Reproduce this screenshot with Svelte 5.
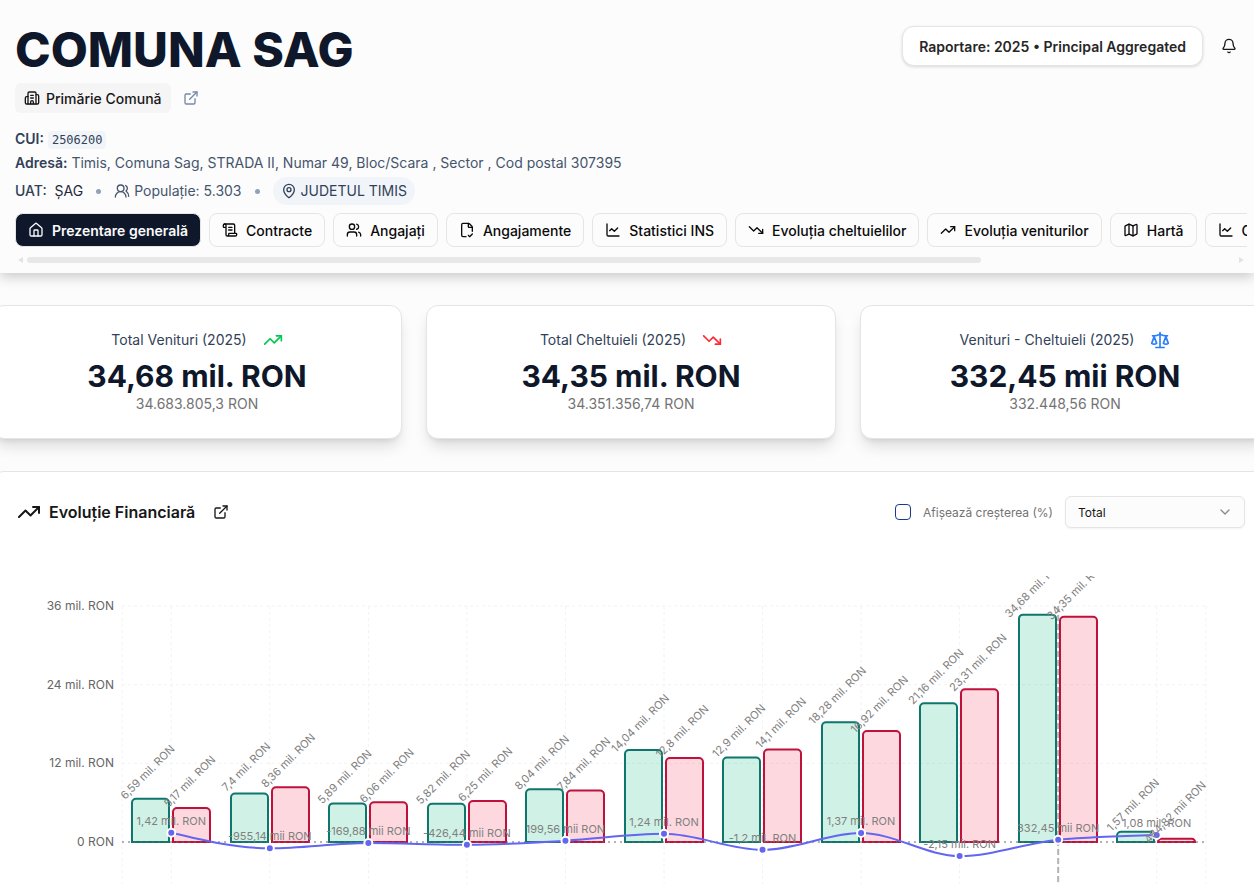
<script>
    const icons = {
        building: [
            "M10 12h4",
            "M10 8h4",
            "M14 21v-3a2 2 0 0 0-4 0v3",
            "M6 10H4a2 2 0 0 0-2 2v7a2 2 0 0 0 2 2h16a2 2 0 0 0 2-2V9a2 2 0 0 0-2-2h-2",
            "M6 21V5a2 2 0 0 1 2-2h8a2 2 0 0 1 2 2v16",
        ],
        external: ["M15 3h6v6", "M10 14 21 3", "M18 13v6a2 2 0 0 1-2 2H5a2 2 0 0 1-2-2V8a2 2 0 0 1 2-2h6"],
        people: ["M18 21a8 8 0 0 0-16 0", "M5 8a5 5 0 1 0 10 0a5 5 0 1 0-10 0", "M22 20c0-3.37-2-6.5-4-8a5 5 0 0 0-.45-8.3"],
        pin: [
            "M20 10c0 4.993-5.539 10.193-7.399 11.799a1 1 0 0 1-1.202 0C9.539 20.193 4 14.993 4 10a8 8 0 0 1 16 0",
            "M9 10a3 3 0 1 0 6 0a3 3 0 1 0-6 0",
        ],
        home: [
            "M15 21v-8a1 1 0 0 0-1-1h-4a1 1 0 0 0-1 1v8",
            "M3 10a2 2 0 0 1 .709-1.528l7-6a2 2 0 0 1 2.582 0l7 6A2 2 0 0 1 21 10v9a2 2 0 0 1-2 2H5a2 2 0 0 1-2-2z",
        ],
        scroll: [
            "M15 12h-5",
            "M15 8h-5",
            "M19 17V5a2 2 0 0 0-2-2H4",
            "M8 21h12a2 2 0 0 0 2-2v-1a1 1 0 0 0-1-1H11a1 1 0 0 0-1 1v1a2 2 0 1 1-4 0V5a2 2 0 1 0-4 0v2a1 1 0 0 0 1 1h3",
        ],
        users: [
            "M16 21v-2a4 4 0 0 0-4-4H6a4 4 0 0 0-4 4v2",
            "M16 3.128a4 4 0 0 1 0 7.744",
            "M22 21v-2a4 4 0 0 0-3-3.87",
            "M5 7a4 4 0 1 0 8 0a4 4 0 1 0-8 0",
        ],
        fileCheck: [
            "M10.5 22H6a2 2 0 0 1-2-2V4a2 2 0 0 1 2-2h8a2.4 2.4 0 0 1 1.706.706l3.588 3.588A2.4 2.4 0 0 1 20 8v6",
            "M14 2v5a1 1 0 0 0 1 1h5",
            "m14 20 2 2 4-4",
        ],
        chart: ["M3 3v16a2 2 0 0 0 2 2h16", "m19 9-5 5-4-4-3 3"],
        down: ["M16 17h6v-6", "m22 17-8.5-8.5-5 5L2 7"],
        up: ["M16 7h6v6", "m22 7-8.5 8.5-5-5L2 17"],
        map: [
            "M14.106 5.553a2 2 0 0 0 1.788 0l3.659-1.83A1 1 0 0 1 21 4.619v12.764a1 1 0 0 1-.553.894l-4.553 2.277a2 2 0 0 1-1.788 0l-4.212-2.106a2 2 0 0 0-1.788 0l-3.659 1.83A1 1 0 0 1 3 19.381V6.618a1 1 0 0 1 .553-.894l4.553-2.277a2 2 0 0 1 1.788 0z",
            "M15 5.764v15",
            "M9 3.236v15",
        ],
        bell: [
            "M10.268 21a2 2 0 0 0 3.464 0",
            "M3.262 15.326A1 1 0 0 0 4 17h16a1 1 0 0 0 .74-1.673C19.41 13.956 18 12.499 18 8A6 6 0 0 0 6 8c0 4.499-1.411 5.956-2.738 7.326",
        ],
        scale: [
            "m16 16 3-8 3 8c-.87.65-1.92 1-3 1s-2.13-.35-3-1Z",
            "m2 16 3-8 3 8c-.87.65-1.92 1-3 1s-2.13-.35-3-1Z",
            "M7 21h10",
            "M12 3v18",
            "M3 7h2c2 0 5-1 7-2 2 1 5 2 7 2h2",
        ],
    };

    const tabs = [
        { label: "Prezentare generală", icon: "home" },
        { label: "Contracte", icon: "scroll" },
        { label: "Angajați", icon: "users" },
        { label: "Angajamente", icon: "fileCheck" },
        { label: "Statistici INS", icon: "chart" },
        { label: "Evoluția cheltuielilor", icon: "down" },
        { label: "Evoluția veniturilor", icon: "up" },
        { label: "Hartă", icon: "map" },
        { label: "Clasament", icon: "chart" },
    ];
    let activeTab = $state("Prezentare generală");

    const cards = [
        { title: "Total Venituri (2025)", value: "34,68 mil. RON", exact: "34.683.805,3 RON", icon: "up", tone: "green" },
        { title: "Total Cheltuieli (2025)", value: "34,35 mil. RON", exact: "34.351.356,74 RON", icon: "down", tone: "red" },
        { title: "Venituri - Cheltuieli (2025)", value: "332,45 mii RON", exact: "332.448,56 RON", icon: "scale", tone: "blue" },
    ];

    // amounts in millions of RON
    const years = [
        { income: 6.59, expense: 5.17, balance: 1.42 },
        { income: 7.4, expense: 8.36, balance: -0.95514 },
        { income: 5.89, expense: 6.06, balance: -0.16988 },
        { income: 5.82, expense: 6.25, balance: -0.42644 },
        { income: 8.04, expense: 7.84, balance: 0.19956 },
        { income: 14.04, expense: 12.8, balance: 1.24 },
        { income: 12.9, expense: 14.1, balance: -1.2 },
        { income: 18.28, expense: 16.92, balance: 1.37 },
        { income: 21.16, expense: 23.31, balance: -2.15 },
        { income: 34.68, expense: 34.35, balance: 0.33245 },
        { income: 1.57, expense: 0.48482, balance: 1.08 },
    ];
    const ticks = [36, 24, 12, 0];
    const selectedYear = 9;

    let showGrowth = $state(false);
    let mode = $state("total");

    const chartHeight = 308;
    const zeroY = 266;
    const perMil = 236 / 36;
    const barWidth = 37;
    let chartWidth = $state(1228);

    const left = 105;
    const right = $derived(chartWidth - 39);
    const band = $derived((right - left) / years.length);
    const y = (v) => zeroY - v * perMil;
    const center = (i) => left + band * (i + 0.5);

    const format = (v) =>
        Math.abs(v) >= 1
            ? `${String(v).replace(".", ",")} mil. RON`
            : `${(v * 1000).toFixed(2).replace(".", ",")} mii RON`;

    const barPath = (x, v) => {
        const top = y(v);
        const r = Math.min(4, zeroY - top);
        return `M${x},${top + r}a${r},${r} 0 0 1 ${r},${-r}h${barWidth - 2 * r}a${r},${r} 0 0 1 ${r},${r}V${zeroY}H${x}Z`;
    };

    // monotone cubic through the points
    const smooth = (pts) => {
        const n = pts.length;
        const slope = (i) => (pts[i + 1].y - pts[i].y) / (pts[i + 1].x - pts[i].x);
        const t = pts.map((_, i) => {
            if (i === 0 || i === n - 1) return null;
            const a = slope(i - 1);
            const b = slope(i);
            if (a * b <= 0) return 0;
            return Math.sign(a) * Math.min(2 * Math.abs(a), 2 * Math.abs(b), Math.abs(a + b) / 2);
        });
        t[0] = (3 * slope(0) - t[1]) / 2;
        t[n - 1] = (3 * slope(n - 2) - t[n - 2]) / 2;
        let d = `M${pts[0].x},${pts[0].y}`;
        for (let i = 0; i < n - 1; i++) {
            const p = pts[i];
            const q = pts[i + 1];
            const dx = (q.x - p.x) / 3;
            d += `C${p.x + dx},${p.y + dx * t[i]} ${q.x - dx},${q.y - dx * t[i + 1]} ${q.x},${q.y}`;
        }
        return d;
    };

    const points = $derived(years.map((d, i) => ({ x: center(i), y: y(d.balance) })));
</script>

{#snippet icon(name, cls)}
    <svg class="icon {cls}" viewBox="0 0 24 24" aria-hidden="true">
        {#each icons[name] as d}
            <path {d} />
        {/each}
    </svg>
{/snippet}

<header>
    <div class="top">
        <h1>COMUNA SAG</h1>
        <div class="actions">
            <button class="report">Raportare: 2025 • Principal Aggregated</button>
            <button class="bell" aria-label="Notificări">{@render icon("bell", "sm")}</button>
        </div>
    </div>

    <div class="kind">
        <span class="badge">{@render icon("building", "sm")}Primărie Comună</span>
        <a href="#site" aria-label="Site oficial">{@render icon("external", "sm slate")}</a>
    </div>

    <div class="details">
        <p><b>CUI:</b> <code>2506200</code></p>
        <p><b>Adresă:</b> Timis, Comuna Sag, STRADA II, Numar 49, Bloc/Scara , Sector , Cod postal 307395</p>
        <p class="uat">
            <span class="dark"><b class="medium">UAT:</b>&nbsp; ȘAG</span>
            <i class="dot"></i>
            <span class="population">{@render icon("people", "sm")}Populație: 5.303</span>
            <i class="dot"></i>
            <a class="county" href="#judet">{@render icon("pin", "sm")}JUDETUL TIMIS</a>
        </p>
    </div>

    <nav>
        {#each tabs as tab}
            <button class="tab" class:active={tab.label === activeTab} onclick={() => (activeTab = tab.label)}>
                {@render icon(tab.icon, "sm")}{tab.label}
            </button>
        {/each}
    </nav>
    <div class="scrollbar" aria-hidden="true">
        <svg viewBox="0 0 6 8"><path d="M6 1v6L1 4z" /></svg>
        <div class="track"><div class="thumb"></div></div>
        <svg viewBox="0 0 6 8"><path d="M0 1v6l5-3z" /></svg>
    </div>
</header>

<main>
    <section class="cards">
        {#each cards as card}
            <article>
                <h2>{card.title}{@render icon(card.icon, `md ${card.tone}`)}</h2>
                <strong>{card.value}</strong>
                <p>{card.exact}</p>
            </article>
        {/each}
    </section>

    <section class="evolution">
        <div class="heading">
            <h3>{@render icon("up", "lg")}Evoluție Financiară</h3>
            <a href="#evolutie" aria-label="Deschide graficul">{@render icon("external", "sm")}</a>
            <div class="controls">
                <label><input type="checkbox" bind:checked={showGrowth} />Afișează creșterea (%)</label>
                <div class="select">
                    <select aria-label="Mod de afișare" bind:value={mode}>
                        <option value="total">Total</option>
                        <option value="capita">Per capita</option>
                    </select>
                    <svg class="icon chevron" viewBox="0 0 24 24" aria-hidden="true"><path d="m6 9 6 6 6-6" /></svg>
                </div>
            </div>
        </div>

        <div class="chart" bind:clientWidth={chartWidth}>
            <svg width={chartWidth} height={chartHeight} role="img" aria-label="Evoluție Financiară">
                <g class="grid">
                    {#each ticks.slice(0, 3) as tick}
                        <line x1={left} x2={right} y1={y(tick)} y2={y(tick)} />
                    {/each}
                    <line x1={left} x2={left} y1={y(36)} y2={chartHeight} />
                    {#each years as _, i}
                        <line x1={center(i)} x2={center(i)} y1={y(36)} y2={chartHeight} />
                    {/each}
                    <line x1={right} x2={right} y1={y(36)} y2={chartHeight} />
                </g>
                {#each ticks as tick}
                    <text class="tick" x={left - 8} y={y(tick) + 4}>{tick} {tick ? "mil. " : ""}RON</text>
                {/each}
                <line class="selected" x1={center(selectedYear)} x2={center(selectedYear)} y1={y(36)} y2={chartHeight} />
                {#each years as d, i}
                    <path class="income" d={barPath(Math.round(left + band * i) + 10, d.income)} />
                    <path class="expense" d={barPath(Math.round(left + band * i) + 51, d.expense)} />
                {/each}
                <line class="zero" x1={left} x2={right} y1={zeroY} y2={zeroY} />
                <path class="balance" d={smooth(points)} />
                {#each points as p}
                    <circle cx={p.x} cy={p.y} r="4" />
                {/each}
                {#each years as d, i}
                    {@const x = center(i)}
                    <text class="value" transform="translate({x - 21} {y(d.income) - 24}) rotate(-45)">{format(d.income)}</text>
                    <text class="value" transform="translate({x + 21} {y(d.expense) - 24}) rotate(-45)">{format(d.expense)}</text>
                    <text class="value" {x} y={y(d.balance) - 8}>{format(d.balance)}</text>
                {/each}
            </svg>
        </div>
    </section>
</main>

<style>
    :global(body) {
        margin: 0;
        background: #fcfcfc;
        font-family: Inter, sans-serif;
        font-size: 14px;
        color: #171717;
        overflow-x: hidden;
    }
    h1, h2, h3, p {
        margin: 0;
    }
    button, input, select {
        font: inherit;
        color: inherit;
    }
    a {
        color: inherit;
        text-decoration: none;
        display: inline-flex;
    }
    .icon {
        fill: none;
        stroke: currentColor;
        stroke-width: 2;
        stroke-linecap: round;
        stroke-linejoin: round;
        flex: none;
        width: 16px;
        height: 16px;
    }
    .md {
        width: 20px;
        height: 20px;
    }
    .lg {
        width: 24px;
        height: 24px;
    }
    .slate { color: #7588a8; }
    .green { color: #00c951; }
    .red { color: #fb2c36; }
    .blue { color: #2b7fff; }

    header {
        padding: 26px 7px 8px 15px;
        box-shadow: 0 4px 12px rgba(0, 0, 0, 0.2);
        background: #fcfcfc;
    }
    .top {
        display: flex;
        justify-content: space-between;
        align-items: flex-start;
    }
    h1 {
        font-size: 48px;
        line-height: 48px;
        font-weight: 800;
        color: #0f172b;
    }
    .actions {
        display: flex;
        align-items: center;
        gap: 8px;
    }
    .report {
        height: 40px;
        padding: 0 16px;
        border: 1px solid #e5e5e5;
        border-radius: 12px;
        background: #fff;
        font-weight: 600;
        color: #262626;
        box-shadow: 0 1px 3px rgba(0, 0, 0, 0.15);
    }
    .bell {
        display: flex;
        padding: 10px;
        border: 0;
        background: none;
    }
    .kind {
        display: flex;
        align-items: center;
        gap: 12px;
        margin-top: 9px;
    }
    .badge {
        display: inline-flex;
        align-items: center;
        gap: 6px;
        height: 30px;
        padding: 0 9px;
        border-radius: 6px;
        background: #f5f5f5;
        font-weight: 500;
    }
    .details {
        margin-top: 14px;
        color: #45556c;
        line-height: 24px;
    }
    .details b {
        font-weight: 600;
        color: #314158;
    }
    .details .medium {
        font-weight: 500;
    }
    .dark {
        color: #1d293d;
    }
    code {
        padding: 2px 4px;
        border-radius: 4px;
        background: #f1f5f9;
        font: 12px "DejaVu Sans Mono", monospace;
        color: #314158;
    }
    .uat {
        display: flex;
        align-items: center;
        gap: 13px;
        margin-top: 2px;
    }
    .dot {
        width: 5px;
        height: 5px;
        border-radius: 50%;
        background: #90a1b9;
    }
    .population {
        display: flex;
        align-items: center;
        gap: 4px;
    }
    .county {
        align-items: center;
        gap: 4px;
        height: 28px;
        padding: 0 8px;
        border-radius: 14px;
        background: #f1f5f9;
        color: #314158;
    }
    nav {
        display: flex;
        gap: 8px;
        margin-top: 8px;
        overflow: hidden;
    }
    .tab {
        display: flex;
        align-items: center;
        gap: 8px;
        flex: none;
        height: 34px;
        padding: 0 12px;
        border: 1px solid #e5e5e5;
        border-radius: 8px;
        background: #fcfcfc;
        font-weight: 500;
        color: #0a0a0a;
    }
    .tab.active {
        background: #0f172b;
        font-weight: 600;
        color: #fafafa;
    }
    .scrollbar {
        display: flex;
        align-items: center;
        gap: 4px;
        height: 10px;
        margin-top: 8px;
        padding: 0 2px;
    }
    .scrollbar svg {
        width: 6px;
        height: 8px;
        fill: #e3e3e3;
    }
    .track {
        flex: 1;
    }
    .thumb {
        width: 79%;
        height: 6px;
        border-radius: 3px;
        background: #e8e8e8;
    }

    /* the content runs a little past both window edges */
    main {
        margin: 32px -16px 0 -8px;
    }
    .cards {
        display: grid;
        grid-template-columns: repeat(3, 1fr);
        gap: 24px;
    }
    article {
        display: flex;
        flex-direction: column;
        align-items: center;
        box-sizing: border-box;
        height: 134px;
        padding-top: 24px;
        border: 1px solid #e5e5e5;
        border-radius: 12px;
        background: #fff;
        box-shadow: 0 10px 15px -3px rgba(0, 0, 0, 0.13), 0 4px 6px -4px rgba(0, 0, 0, 0.13);
    }
    h2 {
        display: flex;
        align-items: center;
        gap: 16px;
        font-size: 14px;
        line-height: 20px;
        font-weight: 400;
        color: #314158;
    }
    strong {
        margin-top: 8px;
        font-size: 30px;
        line-height: 36px;
        font-weight: 700;
        color: #0f172b;
    }
    article p {
        line-height: 20px;
        color: #737373;
    }
    .evolution {
        margin-top: 32px;
        padding: 24px 24px 0;
        border: 1px solid #e5e5e5;
        border-bottom: 0;
        border-radius: 12px 12px 0 0;
        background: #fff;
    }
    .heading {
        display: flex;
        align-items: center;
        gap: 18px;
    }
    h3 {
        display: flex;
        align-items: center;
        gap: 8px;
        font-size: 16px;
        font-weight: 600;
    }
    .controls {
        display: flex;
        align-items: center;
        gap: 12px;
        margin-left: auto;
        font-size: 12px;
    }
    label {
        display: flex;
        align-items: center;
        gap: 12px;
        color: #737373;
    }
    input {
        appearance: none;
        width: 16px;
        height: 16px;
        margin: 0;
        border: 1px solid #1c398e;
        border-radius: 4px;
    }
    input:checked {
        background: #1c398e;
    }
    .select {
        display: grid;
        align-items: center;
    }
    select {
        grid-area: 1 / 1;
        appearance: none;
        width: 180px;
        height: 32px;
        padding: 0 12px;
        border: 1px solid #e5e5e5;
        border-radius: 6px;
        background: #fcfcfc;
        box-shadow: 0 1px 2px rgba(0, 0, 0, 0.05);
    }
    .chevron {
        grid-area: 1 / 1;
        justify-self: end;
        margin-right: 12px;
        color: #8a8a8a;
        pointer-events: none;
    }
    .chart {
        margin-top: 48px;
        overflow: hidden;
    }
    .chart svg {
        display: block;
    }
    .grid line {
        stroke: #f2f2f2;
        stroke-dasharray: 3 3;
    }
    .tick {
        font-size: 12px;
        fill: #666;
        text-anchor: end;
    }
    .value {
        font-size: 11px;
        fill: #808080;
        text-anchor: middle;
    }
    .income {
        fill: rgba(16, 185, 129, 0.2);
        stroke: #0f766e;
        stroke-width: 2;
    }
    .expense {
        fill: rgba(244, 63, 94, 0.2);
        stroke: #be123c;
        stroke-width: 2;
    }
    .zero {
        stroke: #666;
        stroke-dasharray: 2 4;
    }
    .selected {
        stroke: #b3b3b3;
        stroke-width: 2;
        stroke-dasharray: 6 3;
    }
    .balance {
        fill: none;
        stroke: #6366f1;
        stroke-width: 2;
    }
    circle {
        fill: #6366f1;
        stroke: #fff;
        stroke-width: 2;
    }
</style>
